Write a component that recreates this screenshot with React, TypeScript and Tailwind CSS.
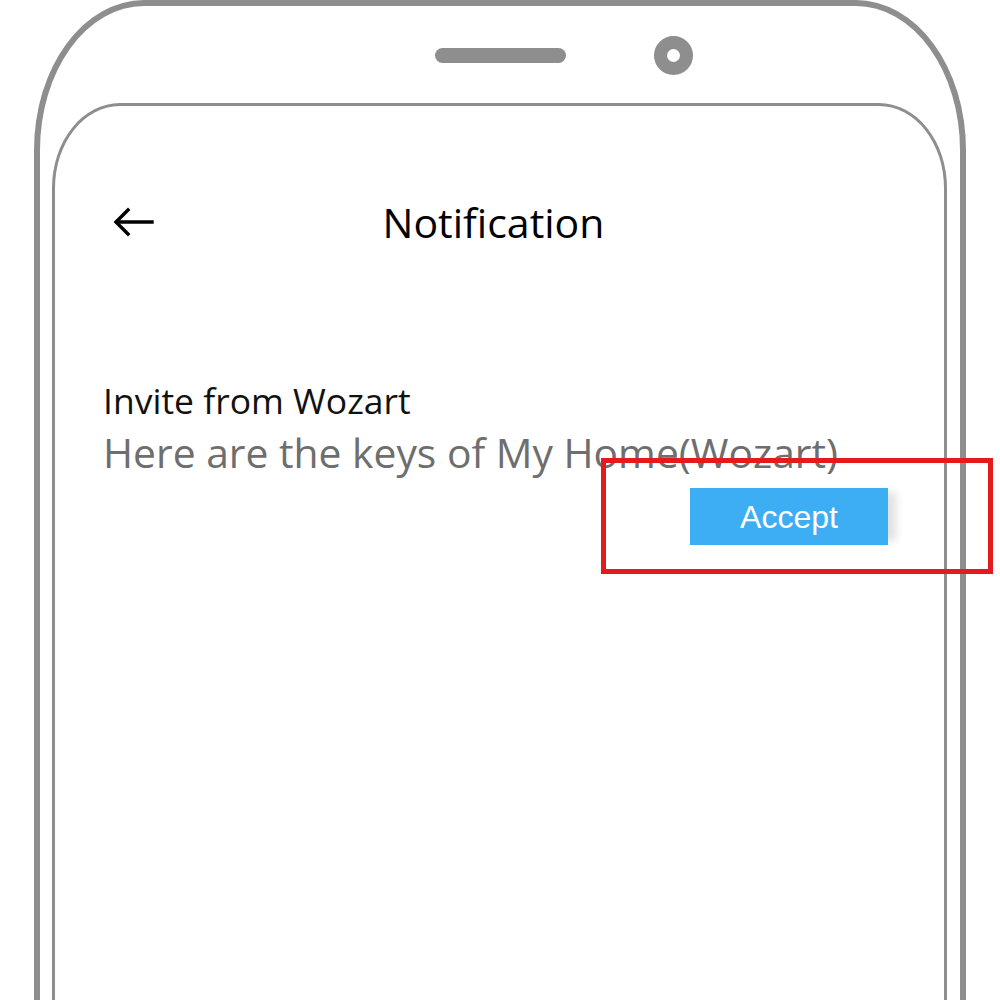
import React from 'react';

// Phone mockup: Notification screen with highlighted Accept button
function BackArrow() {
  return (
    <svg width="42" height="30" viewBox="0 0 42 30" fill="none" stroke="#000" strokeWidth="3.4" strokeLinecap="square">
      <path d="M4 15 H39" />
      <path d="M15 3 L3 15 L15 27" />
    </svg>
  );
}

export default function App() {
  return (
    <div className="relative h-[1000px] w-[1000px] overflow-hidden bg-white font-['Open_Sans',sans-serif]">
      <div className="ml-[34px] h-[1100px] w-[932px] rounded-tl-[110px_150px] rounded-tr-[110px_150px] border-[6px] border-b-0 border-[#8e8e8e]">
        {/* bezel: speaker + camera */}
        <div className="flex h-[97px] items-start pl-[395px] pt-[30px]">
          <div className="flex items-center gap-[88px]">
            <div className="h-[15px] w-[131px] rounded-full bg-[#8e8e8e]" />
            <div className="h-[39px] w-[39px] rounded-full border-[13px] border-[#8e8e8e]" />
          </div>
        </div>

        {/* screen */}
        <div className="ml-[12px] mr-[13px] h-[1000px] rounded-tl-[68px_85px] rounded-tr-[68px_85px] border-[3px] border-b-0 border-[#8e8e8e]">
          <div className="flex items-center pl-[58px] pr-[48px] pt-[89px]">
            <BackArrow />
            <div className="flex-1 pr-[64px] text-center text-[41px] leading-[54px] text-black">Notification</div>
          </div>

          <div className="mt-[127px] pl-[48px]">
            <div className="text-[35.5px] leading-[49px] text-[#111]">Invite from Wozart</div>
            <div className="text-[40.8px] leading-[54px] whitespace-nowrap text-[#6e6e6e]">
              Here are the keys of My Home(Wozart)
            </div>
          </div>

          <div className="mt-[9px] flex justify-end pr-[56px]">
            <button className="h-[57px] w-[198px] bg-[#3eaef4] font-['Liberation_Sans',Arial,sans-serif] text-[32px] text-white shadow-[12px_0_8px_-4px_rgba(0,0,0,0.12)]">
              Accept
            </button>
          </div>
        </div>
      </div>

      {/* annotation box */}
      <div className="absolute left-[601px] top-[458px] h-[116px] w-[392px] border-[5px] border-[#e31b1f]" />
    </div>
  );
}
